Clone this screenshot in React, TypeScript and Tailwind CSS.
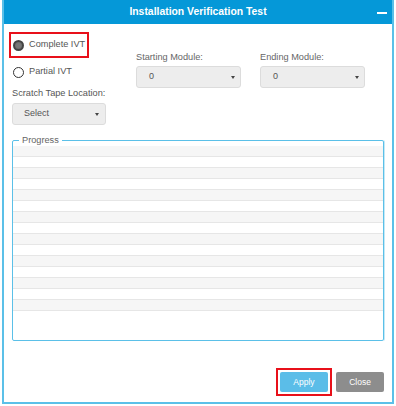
import React from 'react';

const font = { fontFamily: '"Liberation Sans", Arial, sans-serif' };

const Caret = () => (
  <svg width="4" height="3" viewBox="0 0 4 3" className="shrink-0">
    <path d="M0 0 L4 0 L2 3 Z" fill="#444" />
  </svg>
);

interface SelectBoxProps {
  value: string;
  className?: string;
}

const SelectBox: React.FC<SelectBoxProps> = ({ value, className }) => (
  <div
    className={`flex items-center justify-between rounded-[3px] border border-[#dcdcdc] bg-[#ededed] text-[9px] text-[#555] ${className ?? ''}`}
  >
    <span>{value}</span>
    <Caret />
  </div>
);

const Radio: React.FC<{ checked?: boolean }> = ({ checked }) =>
  checked ? (
    <span className="flex h-[11px] w-[11px] items-center justify-center rounded-full border-[2px] border-[#444] bg-[#6f6f6f]">
      <span className="h-[5px] w-[5px] rounded-full bg-[#777]" />
    </span>
  ) : (
    <span className="h-[11px] w-[11px] rounded-full border-[1.5px] border-[#333] bg-white" />
  );

export default function App() {
  const rows = Array.from({ length: 15 }, (_, i) => i);

  return (
    <div className="h-[406px] w-[396px] bg-white pl-[2px]" style={font}>
      <div className="flex h-[404px] w-[392px] flex-col border-x-2 border-b-2 border-[#5bc0e8] bg-white">
        <div className="relative flex h-[24px] shrink-0 items-center justify-center bg-[#0598d8]">
          <span className="text-[10.4px] font-bold text-white">Installation Verification Test</span>
          <span className="absolute right-[5px] top-[12px] h-[2px] w-[10px] bg-white" />
        </div>

        <div className="flex px-[5px]">
          <div className="flex w-[127px] flex-col">
            <div className="mt-[8px] flex h-[26px] w-[80px] items-center gap-[5px] border-2 border-[#e8101a] pl-[2px] text-[9.2px] text-[#555]">
              <Radio checked />
              <span>Complete IVT</span>
            </div>
            <div className="mt-[7px] flex h-[14px] items-center gap-[5px] pl-[4px] text-[9.2px] text-[#555]">
              <Radio />
              <span>Partial IVT</span>
            </div>
            <div className="ml-[3px] mt-[9px] text-[9.2px] leading-[10px] text-[#555]">Scratch Tape Location:</div>
            <SelectBox value="Select" className="ml-[3px] mt-[5px] h-[22px] w-[94px] pl-[11px] pr-[6px]" />
          </div>

          <div className="mt-[28px] flex gap-[19px]">
            <div className="flex flex-col">
              <div className="text-[9.2px] leading-[10px] text-[#666]">Starting Module:</div>
              <SelectBox value="0" className="mt-[4px] h-[22px] w-[105px] pl-[12px] pr-[5px]" />
            </div>
            <div className="flex flex-col">
              <div className="text-[9.2px] leading-[10px] text-[#666]">Ending Module:</div>
              <SelectBox value="0" className="mt-[4px] h-[22px] w-[105px] pl-[12px] pr-[5px]" />
            </div>
          </div>
        </div>

        <div className="mt-[10px] px-[8px]">
          <fieldset className="h-[206px] rounded-[2px] border border-[#5bc0e8] shadow-[1px_0_0_#c4e8f6]">
            <legend className="ml-[6px] px-[3px] text-[9.2px] leading-[10px] text-[#666]">Progress</legend>
            <div className="mt-[1px] flex flex-col">
              {rows.map((i) => (
                <div
                  key={i}
                  className={`h-[11px] border-b border-[#e6e6e6] ${i % 2 === 0 ? 'bg-[#f6f6f6]' : 'bg-white'}`}
                />
              ))}
            </div>
          </fieldset>
        </div>

        <div className="mt-[27px] flex items-center justify-end gap-[4px] px-[8px]">
          <div className="border-2 border-[#e8101a] p-[2px]">
            <button className="flex h-[20px] w-[48px] items-center justify-center rounded-[2px] bg-[#5bbde8] text-[8.5px] text-white">
              Apply
            </button>
          </div>
          <button className="flex h-[20px] w-[48px] items-center justify-center rounded-[2px] bg-[#8d8d8d] text-[8.5px] text-white">
            Close
          </button>
        </div>
      </div>
    </div>
  );
}
